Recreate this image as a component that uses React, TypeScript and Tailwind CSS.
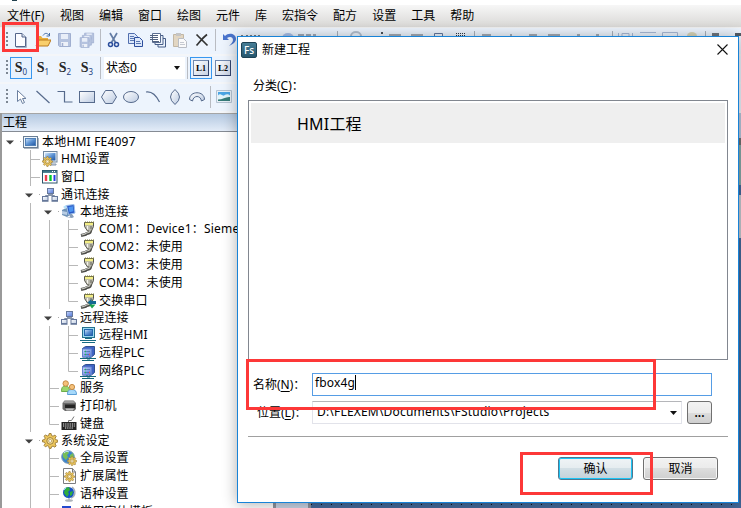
import type { ReactNode } from "react";

const Svg = ({ w = 16, h = 16, children }: { w?: number; h?: number; children: ReactNode }) => (
  <svg width={w} height={h} viewBox={`0 0 ${w} ${h}`} fill="none" className="block shrink-0">
    {children}
  </svg>
);

const Gradients = () => (
  <svg width="0" height="0" className="absolute">
    <defs>
      <linearGradient id="scr" x1="0" y1="0" x2="1" y2="1">
        <stop offset="0" stopColor="#d4e8fb" />
        <stop offset=".5" stopColor="#5d93d3" />
        <stop offset="1" stopColor="#1e54a0" />
      </linearGradient>
      <linearGradient id="pale" x1="0" y1="0" x2="1" y2="1">
        <stop offset="0" stopColor="#ffffff" />
        <stop offset="1" stopColor="#bccbe2" />
      </linearGradient>
      <linearGradient id="box" x1="0" y1="0" x2="1" y2="1">
        <stop offset="0" stopColor="#c9d9ff" />
        <stop offset="1" stopColor="#4f74d4" />
      </linearGradient>
    </defs>
  </svg>
);

const gear = "M7 0h2l.5 2.2 1.6.7 2-1.2 1.4 1.4-1.2 2 .7 1.6 2.2.5v2l-2.2.5-.7 1.6 1.2 2-1.4 1.4-2-1.2-1.6.7L9 16H7l-.5-2.2-1.6-.7-2 1.2-1.4-1.4 1.2-2-.7-1.6L-.2 9V7L2 6.5l.7-1.6-1.2-2 1.4-1.4 2 1.2 1.6-.7z";
const Gear = ({ t }: { t: string }) => (
  <g transform={t}>
    <path d={gear} fill="#edc75c" stroke="#9a7a36" strokeWidth="1" />
    <circle cx="8" cy="8" r="3.6" fill="#f8e39b" stroke="#9a7a36" />
    <circle cx="8" cy="8" r="1.6" fill="#fff" stroke="#9a7a36" strokeWidth=".6" />
  </g>
);

const NetShape = () => (
  <>
    <path d="M8 6v3M3.5 11V8.5h9V11" stroke="#8290a6" />
    <rect x="5.5" y="1.500" width="6" height="5" fill="url(#box)" stroke="#66789b" />
    <rect x=".5" y="9.500" width="5.500" height="4" fill="url(#pale)" stroke="#66789b" />
    <rect x="10" y="9.500" width="5.500" height="4" fill="url(#pale)" stroke="#66789b" />
    <path d="M0 14.500h6.500M9.500 14.500H16M6 7.500h5" stroke="#8896af" />
  </>
);

const PlugShape = () => (
  <>
    <path d="M10.500 8v2c0 3-4 1.500-5 3.500L1 14.500" stroke="#4c4c48" strokeWidth="3" />
    <path d="M4.500 1.500h9v4l-2 4.500h-4l-3-4.500z" fill="#b5b4a8" stroke="#55544a" />
    <path d="M5 3h8" stroke="#f3ee86" strokeWidth="2.400" />
    <path d="M5 1.200h9" stroke="#7c7935" strokeWidth="1.200" strokeDasharray="1 1" />
    <path d="M10 8.500v1.500c0 2.500-4 1-5 3L1.500 14" stroke="#c9c9c2" strokeWidth="1.100" />
    <path d="M7.500 5v3.500" stroke="#f4f3ec" strokeWidth="1.300" />
    <path d="M11 5v3" stroke="#77766b" strokeWidth="1.200" />
  </>
);

const PlcShape = () => (
  <>
    <path d="M2.500 3.500l3-2h9v8l-3 2.500h-9z" fill="#3f63c4" stroke="#31508f" />
    <path d="M2.500 4h9v8h-9z" fill="url(#box)" stroke="#6583cc" />
    <path d="M4.500 6.500h6M4.500 9.500h6" stroke="#28508c" strokeDasharray="1 1" />
    <path d="M5 6.500h1M5 9.500h1" stroke="#18c653" strokeWidth="1.400" />
    <path d="M9 9.500h1" stroke="#e85068" strokeWidth="1.400" />
    <path d="M0 13.500h16M2 15.500h12" stroke="#14677a" />
    <path d="M7 12v2h3v-2" stroke="#14677a" />
  </>
);

const treeIcons: Record<string, ReactNode> = {
  screen: (
    <>
      <rect x=".5" y="2.500" width="14" height="11" fill="#eef5fb" stroke="#6a7e94" />
      <rect x="2.500" y="4.500" width="10" height="7" fill="url(#scr)" stroke="#5181b8" />
      <path d="M1 14.500h14.500V4" stroke="#aab4bf" />
    </>
  ),
  config: (
    <>
      <rect x="1.500" y=".5" width="13.500" height="10.500" fill="#eef6fc" stroke="#71879f" />
      <rect x="3" y="2" width="10.500" height="7.500" fill="url(#scr)" />
      <path d="M9 11v2h5v1H8" stroke="#8496ad" />
      <Gear t="translate(.5 5.500) scale(.62)" />
    </>
  ),
  window: (
    <>
      <rect x=".5" y="1.500" width="14.500" height="12.500" fill="#fff" stroke="#2c5468" />
      <path d="M1 2.800h14" stroke="#3f7688" strokeWidth="2.200" />
      <path d="M10 2.500h1M12 2.500h1" stroke="#fff" />
      <path d="M4 6v6" stroke="#ef3d4e" strokeWidth="2.400" />
      <path d="M8.500 6v6" stroke="#00c92b" strokeWidth="2.400" />
      <path d="M12.500 6v6" stroke="#263be8" strokeWidth="2" />
    </>
  ),
  net: <NetShape />,
  local: (
    <>
      <path d="M1 6l4-2 4 1v6l-3 2-5-2z" fill="#7193b7" />
      <path d="M5.500 1.500l7.500-1 1 8.500-6.500 1.500z" fill="#2c5ac6" stroke="#9fc2ea" />
      <path d="M7.500 3l4.500-.7.500 5-4 .9z" fill="#4c94ef" />
      <path d="M1 7l5 1v3l-5-1z" fill="#b9cde4" />
      <path d="M8 10l1 3h-4l6 1 2-1-2-3z" fill="#8aa0ba" />
      <path d="M2 3l3-2v4z" fill="#b4e1fb" />
    </>
  ),
  plug: <PlugShape />,
  swap: (
    <>
      <PlugShape />
      <path d="M7.500 9.500L11.500 6v2H16v3h-4.500v1.500z" fill="#146892" />
      <path d="M9 11.500h6.500l-3.500 4z" fill="#18a34c" />
    </>
  ),
  remote: (
    <>
      <rect x="2.500" y=".5" width="12" height="10" fill="#9bd9f0" stroke="#27718c" />
      <rect x="4.500" y="2.500" width="8" height="6" fill="url(#scr)" stroke="#2366af" />
      <path d="M5 11.500h7M0 13.500h16M2 15.500h13" stroke="#176a82" />
    </>
  ),
  plc: <PlcShape />,
  people: (
    <>
      <path d="M.5 11.500c0-4 1-5.500 4-5.500s4 2 4 5.500z" fill="#9bd66d" stroke="#6dad4b" />
      <circle cx="4.700" cy="3.500" r="2.700" fill="#f5c17a" stroke="#c48b45" />
      <path d="M6.500 14.500c0-4 1.500-5 4.500-5s4.500 1.500 4.500 5z" fill="#a6d9fb" stroke="#5b9ed6" />
      <circle cx="11" cy="7" r="2.600" fill="#f5c17a" stroke="#c48b45" />
    </>
  ),
  printer: (
    <>
      <path d="M1.500 5l2-2.500h9L15 5v6l-2 2H4l-2.500-2z" fill="#6a6a6a" />
      <path d="M3.500 3h9L14 5H2z" fill="#9a9a9a" />
      <path d="M4 6.500h10V10H4z" fill="#242424" />
      <path d="M4.500 10.500h8.500l-1 2H5.500z" fill="#bdbdbd" />
    </>
  ),
  keyboard: (
    <>
      <path d="M7.500 6V4.500h3l2.500-4" stroke="#777" />
      <path d="M.5 6h15v8H.5z" fill="#242424" />
      <path d="M2 8h12M2 10h12M4 12h8" stroke="#eee" strokeDasharray="1 .8" />
    </>
  ),
  gear: <Gear t="translate(.7 .5) scale(.93)" />,
  globegear: (
    <>
      <circle cx="7" cy="7" r="6.300" fill="#3984cf" stroke="#7d9bb7" />
      <path d="M2 3l4-2 2 2-2 2 1 2-2 3-3-3zM9 5l3-2 1 4-2 2-2-1z" fill="#77bd58" />
      <path d="M3 3c2-2 4-2 5-1" stroke="#c5edf9" />
      <Gear t="translate(6.500 6.500) scale(.57)" />
    </>
  ),
  pagegear: (
    <>
      <path d="M2.500.5h9L14.500 4v11.500h-12z" fill="#fff" stroke="#7c7d80" />
      <path d="M11.500.5V4h3" stroke="#777" />
      <Gear t="translate(3.500 3.500) scale(.63)" />
    </>
  ),
  globe: (
    <>
      <path d="M11 1c4 3 4 9-1 11M8 12v2" stroke="#a5adb5" strokeWidth="1.400" />
      <circle cx="7.500" cy="6.500" r="5.500" fill="#1553c5" />
      <path d="M4 2l4-1 1 3-2 2 1 2-2 3-3-4zM9 6l3-1-1 4-2 1z" fill="#30ad3d" />
      <path d="M3 4l2-2" stroke="#7fd5fa" />
      <ellipse cx="8" cy="14.500" rx="4" ry="1.300" fill="#adb4bb" />
    </>
  ),
  font: (
    <>
      <path d="M1 2h9v3H8V4H7v10H4V4H3v1H1z" fill="#2449cf" />
      <path d="M9 6h6" stroke="#7f9be9" strokeWidth="2" />
    </>
  ),
};

type Cell = "blank" | "line" | "tee" | "end" | "open";
const cells: Record<string, Cell[]> = {
  root: ["open"],
  a: ["blank", "tee"],
  A: ["blank", "open"],
  b: ["blank", "line", "tee"],
  B: ["blank", "line", "open"],
  z: ["blank", "line", "end"],
  c: ["blank", "line", "line", "tee"],
  y: ["blank", "line", "line", "end"],
};

const rows: [string, string, string][] = [
  ["root", "screen", "本地HMI FE4097"],
  ["a", "config", "HMI设置"],
  ["a", "window", "窗口"],
  ["A", "net", "通讯连接"],
  ["B", "local", "本地连接"],
  ["c", "plug", "COM1：Device1：Siemens"],
  ["c", "plug", "COM2：未使用"],
  ["c", "plug", "COM3：未使用"],
  ["c", "plug", "COM4：未使用"],
  ["y", "swap", "交换串口"],
  ["B", "net", "远程连接"],
  ["c", "remote", "远程HMI"],
  ["c", "plc", "远程PLC"],
  ["y", "plc", "网络PLC"],
  ["b", "people", "服务"],
  ["b", "printer", "打印机"],
  ["z", "keyboard", "键盘"],
  ["A", "gear", "系统设定"],
  ["b", "globegear", "全局设置"],
  ["b", "pagegear", "扩展属性"],
  ["b", "globe", "语种设置"],
  ["b", "font", "常用字体模板"],
];
const shortRows = new Set([0, 3, 4, 9, 10, 13, 16, 17]);

const TreeCell = ({ kind }: { kind: Cell }) => (
  <svg width="19" height="18" viewBox="0 0 19 18" className="block shrink-0">
    {(kind === "line" || kind === "tee") && <path d="M8.500 0v18" stroke="#b8b8b8" />}
    {kind === "end" && <path d="M8.500 0v9.500" stroke="#b8b8b8" />}
    {(kind === "tee" || kind === "end") && <path d="M8.500 9.500H18" stroke="#b8b8b8" />}
    {kind === "open" && (
      <>
        <path d="M3 7.500h8l-4 4z" fill="#404040" />
        <path d="M17 8.500h1" stroke="#aaa" />
      </>
    )}
  </svg>
);

const Grip = () => (
  <svg width="3" height="18" className="ml-[6px] mr-[1px] shrink-0">
    <path d="M1 1v16" stroke="#7d8793" strokeWidth="2" strokeDasharray="2 2" />
  </svg>
);
const Sep = () => (
  <span className="flex h-[22px] w-[5px] shrink-0 justify-center">
    <span className="w-px bg-[#b9bcc2]" />
  </span>
);
const Tool = ({ children, on = false }: { children: ReactNode; on?: boolean }) => (
  <span
    className={
      "flex h-[22px] w-[22px] shrink-0 items-center justify-center " + (on ? "border border-[#3797ef] bg-[#e7f1fd]" : "")
    }
  >
    {children}
  </span>
);

const State = ({ n }: { n: number }) => (
  <span className="flex items-baseline font-['Liberation_Serif',serif] text-[14px] leading-[16px] font-bold text-[#262626]">
    S<span className="relative top-[3px] font-['Noto_Sans',sans-serif] text-[8px] font-normal text-[#253f80]">{n}</span>
  </span>
);
const Level = ({ n }: { n: number }) => (
  <span className="flex h-[16px] w-[16px] items-center justify-center border border-[#7188ae] border-r-[#33446d] border-b-[#33446d] bg-linear-to-br from-white to-[#c8d2e3] font-['Liberation_Serif',serif] text-[9px] leading-none font-bold text-black">
    L<span className="mt-px text-[8px]">{n}</span>
  </span>
);

const Floppy = ({ x = 0, y = 0 }: { x?: number; y?: number }) => (
  <g transform={`translate(${x} ${y})`}>
    <path d="M1.500 1.500h12v13h-11l-1-1z" fill="#b5c3df" stroke="#a0afd0" />
    <path d="M4 2h7v5H4z" fill="#e8eef8" />
    <path d="M4 10h7v4H4z" fill="#edf1f8" />
    <path d="M5.500 11v3" stroke="#a0afd0" strokeWidth="1.500" />
  </g>
);

const ink = "#566a8c";

const Toolbars = () => (
  <div className="flex h-[85px] flex-col bg-[#f4f6f9]">
    <div className="flex h-[26px] items-center bg-[#edf4fd] pb-[2px]">
      <Grip />
      <Tool>
        <Svg>
          <path d="M3 15.500h10.500V5" stroke="#a8b3c7" />
          <path d="M2.500 1.500h6.500l3.500 3.500v9.500h-10z" fill="#fbfcff" stroke="#53658a" />
          <path d="M9 1.500V5h3.500" fill="#d8e0ee" stroke="#53658a" />
        </Svg>
      </Tool>
      <Tool>
        <Svg>
          <path d="M1 14V4h5l1.500 2H13v8z" fill="#e8af3b" />
          <path d="M1 14l3-6h12l-3 6z" fill="#f9cf6c" stroke="#bb7a1c" />
          <path d="M8 3.500c2-3 4-2.500 6-.5M14.500 1v3h-3" stroke="#456fa9" />
        </Svg>
      </Tool>
      <Tool><Svg><Floppy /></Svg></Tool>
      <Tool>
        <Svg>
          <g transform="scale(.75)"><Floppy x={6} y={0} /><Floppy x={3} y={3} /><Floppy x={0} y={6} /></g>
        </Svg>
      </Tool>
      <Sep />
      <Tool>
        <Svg>
          <path d="M4 1l5.500 9.500M11 1L5.500 10.500" stroke="#647da5" strokeWidth="1.700" />
          <circle cx="4.500" cy="12.500" r="2" stroke="#2a4d9b" strokeWidth="1.500" />
          <circle cx="10.500" cy="12.500" r="2" stroke="#2a4d9b" strokeWidth="1.500" />
        </Svg>
      </Tool>
      <Tool>
        <Svg>
          <path d="M.5 1.500h6l3 3v7h-9z" fill="#dce8fb" stroke="#526fae" />
          <path d="M6.500 5.500h5l3 3v6h-8z" fill="#dce8fb" stroke="#2d4e9d" />
          <path d="M2 4.500h4M2 6.500h4M2 8.500h4M8 9.500h4M8 11.500h5" stroke="#5a77b1" />
        </Svg>
      </Tool>
      <Tool>
        <Svg>
          <path d="M2.500 1.500h8v9h-8z" fill="#fff" stroke="#5b6e91" />
          <path d="M11 3.500h2v9H5V11M13 6.500h2.500v8.500H8V13" stroke="#455c87" />
          <path d="M0 3.500h8M0 5.500h8M0 7.500h8M2 9.500h7" stroke="#52627f" />
        </Svg>
      </Tool>
      <Tool>
        <Svg>
          <path d="M1.500 2.500h10v12h-10z" fill="#e2d6c2" stroke="#c2b7a4" />
          <path d="M4 1h5v3H4z" fill="#c5c5c5" />
          <path d="M6.500 6.500h5l3 3v6h-8z" fill="#fafafa" stroke="#b9bdc5" />
          <path d="M8 10.500h4M8 12.500h5" stroke="#c5c9d1" />
        </Svg>
      </Tool>
      <Tool><Svg><path d="M2.500 2.500c3 3 7 7 11 11M13 2.500c-4 3-7 7-10.500 11" stroke="#343434" strokeWidth="1.700" /></Svg></Tool>
      <Sep />
      <Tool>
        <Svg>
          <path d="M2 2v6h6L6 6c3-2 6-1 6 2 0 2-2 4-4 6 4-2 7-4 7-7 0-5-7-7-11-3z" fill="#4a75ce" />
        </Svg>
      </Tool>
      <span className="mb-[8px] ml-[1px] h-[2px] w-[19px] shrink-0 border-t-2 border-dotted border-[#777b83]" />
      <svg width="480" height="12" className="mb-[12px] ml-[2px] shrink-0">
        <path d="M20 10a6 5 0 0 1 12 0z" fill="#a9bfe8" />
        <path d="M36 7h6M44 7h5M51 7h3" stroke="#a3abb8" strokeWidth="2" />
        <path d="M89 8a5 4 0 0 1 10 0" stroke="#b4bfce" fill="none" strokeWidth="2" />
        <path d="M75.500 3v7M212.500 3v7M350.500 3v7M443.500 3v7" stroke="#a9b0ba" />
        <path d="M119 5h2" stroke="#4a5057" strokeWidth="2" />
        <path d="M127 7h12M149 7h12M220 7h9M248 7h2M267 7h8M286 7h12M315 7h3M334 7h3" stroke="#8d939c" strokeWidth="1.500" />
        <path d="M172.500 9V5.500h8V9" stroke="#63779c" fill="none" />
        <path d="M194 5.500h9M194 7.500h9" stroke="#303844" strokeDasharray="1 1" />
        <path d="M356.500 9V5M370.500 9V5M360 9V5.500h7V9M378 4.500h16M400.500 9V4.500h15V9" stroke="#a9b9d6" fill="none" />
        <path d="M425 8a5 4 0 0 1 10 0" fill="#d8d5b9" />
        <path d="M450 8V5h7v3z" fill="#70767e" />
        <path d="M473 8V5h6v3z" fill="#555d67" />
      </svg>
    </div>
    <div className="mt-[2px] flex h-[26px] items-center bg-[#edf4fd] pb-[2px]">
      <Grip />
      <Tool on><State n={0} /></Tool>
      <Tool><State n={1} /></Tool>
      <Tool><State n={2} /></Tool>
      <Tool><State n={3} /></Tool>
      <Sep />
      <div className="ml-[1px] flex h-[22px] w-[81px] shrink-0 items-center justify-between bg-white pr-[5px] pl-[2px] text-black">
        <span>状态0</span>
        <svg width="6" height="4"><path d="M0 0h6L3 4z" fill="#111" /></svg>
      </div>
      <Sep />
      <Tool on><Level n={1} /></Tool>
      <Tool><Level n={2} /></Tool>
    </div>
    <div className="mt-[2px] flex h-[27px] items-center bg-[#edf4fd] pb-[1px]">
      <Grip />
      <Tool><Svg><path d="M4.500 1.500v11l3-2.500 2 4.500 2-1-2-4h3.500z" fill="#fff" stroke="#6b7f9f" /></Svg></Tool>
      <Tool><Svg><path d="M1.500 2l13 12" stroke={ink} strokeWidth="1.200" /></Svg></Tool>
      <Tool><Svg><path d="M.5 2.500h7v10.500h8" stroke={ink} strokeWidth="1.200" /></Svg></Tool>
      <Tool><Svg><rect x=".5" y="2.500" width="15" height="11" fill="url(#pale)" stroke={ink} /></Svg></Tool>
      <Tool><Svg><path d="M4.500 1.500h7L15.500 8l-4 6.500h-7L.5 8z" fill="url(#pale)" stroke={ink} /></Svg></Tool>
      <Tool><Svg><ellipse cx="8" cy="8" rx="7.500" ry="5.500" fill="url(#pale)" stroke={ink} /></Svg></Tool>
      <Tool><Svg><path d="M1 3c6-1 10 3 13.500 10" stroke={ink} strokeWidth="1.200" /></Svg></Tool>
      <Tool><Svg><path d="M8 .5Q-1 8 8 15.500Q17 8 8 .5z" fill="url(#pale)" stroke={ink} /></Svg></Tool>
      <Tool><Svg><path d="M.5 10.500c0-9 15-9 15 0l-3 1.500c-1-6-8-6-9 0z" fill="url(#pale)" stroke={ink} /></Svg></Tool>
      <Sep />
      <Tool>
        <Svg>
          <path d="M.5 1.500h15v12H.5z" fill="#e8f0f7" stroke="#b4c3d2" />
          <path d="M2 3h12v5H2z" fill="#4ba5e4" />
          <path d="M2 6.500c3-3 4 1 6 0s4-2 6 0V12H2z" fill="#e3f4fa" />
          <path d="M2 10.500c5 0 8-3 12-2.500v4H2z" fill="#377c79" />
        </Svg>
      </Tool>
    </div>
  </div>
);

const menus = ["视图", "编辑", "窗口", "绘图", "元件", "库", "宏指令", "配方", "设置", "工具", "帮助"];

const Dialog = () => (
  <div className="absolute top-[36px] left-[237px] flex h-[467px] w-[502px] flex-col border border-[#1883d7] bg-white shadow-[0_1px_14px_rgba(0,0,0,0.32)]">
    <div className="flex h-[25px] items-center pr-[10px] pl-[3px]">
      <span className="flex h-[16px] w-[16px] items-center justify-center rounded-[2px] border border-[#1d4254] bg-linear-to-b from-[#477e96] to-[#25566d] text-[10px] leading-none font-medium text-white">
        Fs
      </span>
      <span className="ml-[5px]">新建工程</span>
      <svg width="11" height="11" className="ml-auto"><path d="M.5.5l10 10M10.500.5l-10 10" stroke="#111" strokeWidth="1.100" /></svg>
    </div>
    <div className="mt-[14px] ml-[15px] h-[20px] leading-[20px]">
      分类(<u className="underline-offset-2">C</u>)：
    </div>
    <div className="mt-[4px] ml-[10px] h-[260px] w-[480px] border border-[#828790] p-[2px]">
      <div className="flex h-[40px] items-center bg-[#efefef] pl-[46px] text-[16px] tracking-[0.2px]">
        <span className="mt-[2px]">HMI工程</span>
      </div>
    </div>
    <div className="mt-[13px] flex h-[23px] items-center pl-[15px]">
      <span className="w-[59px] whitespace-nowrap">名称(<u className="underline-offset-2">N</u>)：</span>
      <div className="flex h-[23px] w-[400px] items-center border border-[#569de5] pb-[4px] pl-[2px]">
        <span className="tracking-[0.15px]">fbox4g</span>
        <span className="h-[15px] w-px bg-black" />
      </div>
    </div>
    <div className="mt-[5px] flex h-[23px] items-center pl-[19px]">
      <span className="w-[55px] whitespace-nowrap">位置(<u className="underline-offset-2">L</u>)：</span>
      <div className="flex h-[23px] w-[370px] items-center justify-between border border-[#e2e3ea] border-t-[#b5b6ba] pr-[4px] pl-[4px]">
        <span className="mb-[1px] tracking-[0.19px]">D:\FLEXEM\Documents\FStudio\Projects</span>
        <svg width="7" height="4"><path d="M0 0h7L3.500 4z" fill="#111" /></svg>
      </div>
      <button className="ml-[5px] h-[23px] w-[25px] rounded-[3px] border border-[#707070] bg-[linear-gradient(#f2f2f2,#ebebeb_50%,#dddddd_50%,#cfcfcf)] font-semibold leading-[17px]">...</button>
    </div>
    <div className="mt-[12px] ml-[10px] h-px w-[480px] bg-[#a0a0a0]" />
    <div className="mt-[20px] flex gap-[10px] pl-[320px]">
      <button className="h-[23px] w-[75px] rounded-[3px] border border-[#4f7890] bg-[linear-gradient(#f0f4f6,#e5ecef_50%,#d3dfe5_50%,#c4d2da)] shadow-[inset_0_0_0_1px_#1bc4f5]">确认</button>
      <button className="h-[23px] w-[75px] rounded-[3px] border border-[#707070] bg-[linear-gradient(#f2f2f2,#ebebeb_50%,#dddddd_50%,#cfcfcf)] shadow-[inset_0_0_0_1px_#f7f7f7]">取消</button>
    </div>
  </div>
);

export default function App() {
  return (
    <div className="relative flex h-[508px] w-[741px] flex-col overflow-hidden bg-[#f0f0f0] font-['Noto_Sans','Noto_Sans_CJK_SC',sans-serif] text-[12px] leading-[18px] text-black">
      <Gradients />
      <div className="h-[5px] shrink-0 bg-white"><div className="ml-[12px] h-[1px] w-[5px] bg-[#23414f]" /></div>
      <div className="flex h-[22px] shrink-0 items-center gap-[15px] bg-linear-to-b from-[#f7f7f7] to-[#d9d8d6] pl-[7px]">
        <span className="w-[38px] whitespace-nowrap">文件(F)</span>
        {menus.map((m) => <span key={m}>{m}</span>)}
      </div>
      <div className="mt-px shrink-0"><Toolbars /></div>
      <div className="flex min-h-0 flex-1">
        <div className="w-[273px] shrink-0 overflow-hidden border-l-2 border-[#999] bg-white">
          <div className="h-[18px] border-t border-[#a5a5a5] bg-linear-to-b from-[#b5c9e1] to-[#e3ecf8] pl-px leading-[17px]">工程</div>
          <div className="mb-px h-px bg-[#858b94]" />
          {rows.map(([level, icon, label], i) => (
            <div
              key={i}
              className={"flex items-center overflow-hidden pl-px " + (shortRows.has(i) ? "h-[17px]" : "h-[18px]")}
            >
              {cells[level].map((kind, k) => <TreeCell key={k} kind={kind} />)}
              <span className="ml-px"><Svg>{treeIcons[icon]}</Svg></span>
              <span className="ml-[3px] tracking-[0.2px] whitespace-nowrap">{label}</span>
            </div>
          ))}
        </div>
        <div className="w-[38px] shrink-0 border-x-[3px] border-[#8d939e] bg-[#c8d3e4]" />
        <div className="flex flex-1 flex-col items-end bg-[#44699b]">
          <div className="h-[25px] w-full bg-[#b7c8dd]" />
          <div className="h-[7px] w-full bg-[#707070]" />
          <div className="h-[40px] w-full bg-[#87aaa9]" />
          <div className="mt-[10px] h-[43px] w-full bg-[#c5cad1]" />
          <div className="mt-auto mb-[3px] h-px w-full bg-[repeating-linear-gradient(90deg,#111_0_1px,transparent_1px_10px)]" />
        </div>
      </div>
      <Dialog />
      <div className="absolute top-[22px] left-[2px] h-[30px] w-[37px] border-[3px] border-[#fd3838]" />
      <div className="absolute top-[359px] left-[246px] h-[51px] w-[410px] border-[3px] border-[#fd3838]" />
      <div className="absolute top-[452px] left-[520px] h-[43px] w-[133px] border-[3px] border-[#fd3838]" />
    </div>
  );
}
